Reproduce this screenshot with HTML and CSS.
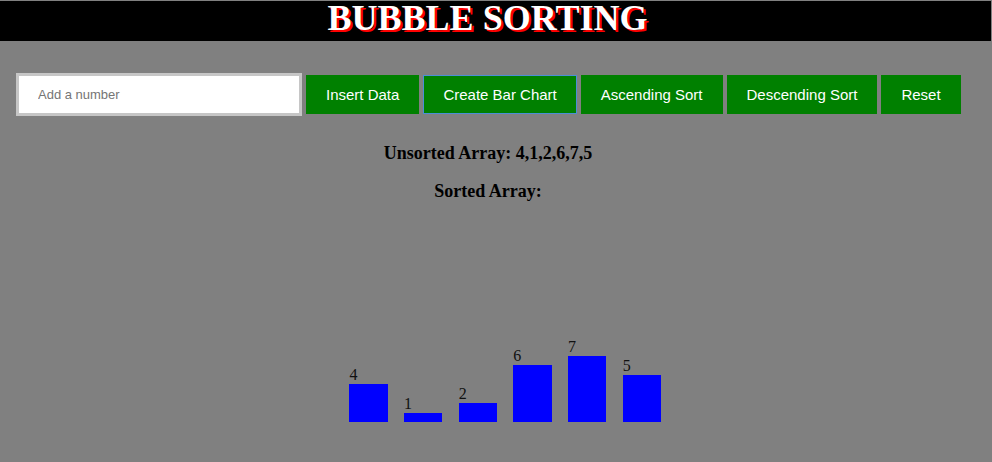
FILE: index.html
```html
<!DOCTYPE html>
<html lang="en">
<head>
<meta charset="utf-8">
<title>Bubble Sorting</title>
<link rel="stylesheet" href="styles.css">
</head>
<body>
<header class="topbar">
  <h1 class="title">BUBBLE SORTING</h1>
</header>
<main class="page">
  <div class="controls">
    <input class="num-input" type="text" placeholder="Add a number">
    <button class="btn">Insert Data</button>
    <button class="btn btn-focus">Create Bar Chart</button>
    <button class="btn">Ascending Sort</button>
    <button class="btn">Descending Sort</button>
    <button class="btn">Reset</button>
  </div>
  <section class="arrays">
    <h3 class="array-line">Unsorted Array: 4,1,2,6,7,5</h3>
    <h3 class="array-line">Sorted Array:</h3>
  </section>
  <div class="chart">
    <div class="col"><span class="val">4</span><div class="bar" style="height:37.9px"></div></div>
    <div class="col"><span class="val">1</span><div class="bar" style="height:9.47px"></div></div>
    <div class="col"><span class="val">2</span><div class="bar" style="height:18.9px"></div></div>
    <div class="col"><span class="val">6</span><div class="bar" style="height:56.8px"></div></div>
    <div class="col"><span class="val">7</span><div class="bar" style="height:66.3px"></div></div>
    <div class="col"><span class="val">5</span><div class="bar" style="height:47.4px"></div></div>
  </div>
</main>
</body>
</html>
```
FILE: styles.css
```css
html, body {
  margin: 0;
  padding: 0;
}
body {
  background: #808080;
  min-height: 462px;
}
.topbar {
  background: #000;
  margin: 1px 1px 0 0;
  height: 40px;
}
.title {
  margin: 0;
  padding-right: 16px;
  text-align: center;
  font: bold 36px/35px "Liberation Serif", "Times New Roman", serif;
  color: #fff;
  text-shadow: 2px 2px 0 #ff0000;
}
.controls {
  display: flex;
  align-items: center;
  gap: 4px;
  margin: 32px 0 0 16px;
}
.num-input {
  box-sizing: border-box;
  width: 286px;
  height: 43px;
  margin: 0;
  border: 3px solid #c6c6c6;
  padding: 0 0 0 19px;
  font: 13px "Liberation Sans", Arial, sans-serif;
  color: #000;
  background: #fff;
  outline: none;
}
.num-input::placeholder {
  color: #757575;
}
.btn {
  box-sizing: border-box;
  height: 39.5px;
  margin: 0;
  padding: 0 19px;
  background: #008000;
  color: #fff;
  border: 1px solid #008000;
  font: 15px "Liberation Sans", Arial, sans-serif;
  cursor: pointer;
}
.btn-focus {
  border-color: #4a8fd6;
}
.arrays {
  padding: 26.5px 16px 0 0;
  text-align: center;
}
.array-line {
  margin: 0 0 17px;
  font: bold 18px/21px "Liberation Serif", "Times New Roman", serif;
  color: #000;
}
.array-line:last-child {
  margin-bottom: 0;
}
.chart {
  height: 220.6px;
  display: flex;
  align-items: flex-end;
  justify-content: center;
  gap: 16.33px;
  padding-left: 18.4px;
}
.col {
  width: 38.33px;
  display: flex;
  flex-direction: column;
}
.val {
  font: 16px/18px "Liberation Serif", "Times New Roman", serif;
  color: #111;
}
.bar {
  background: #0000ff;
}
```
